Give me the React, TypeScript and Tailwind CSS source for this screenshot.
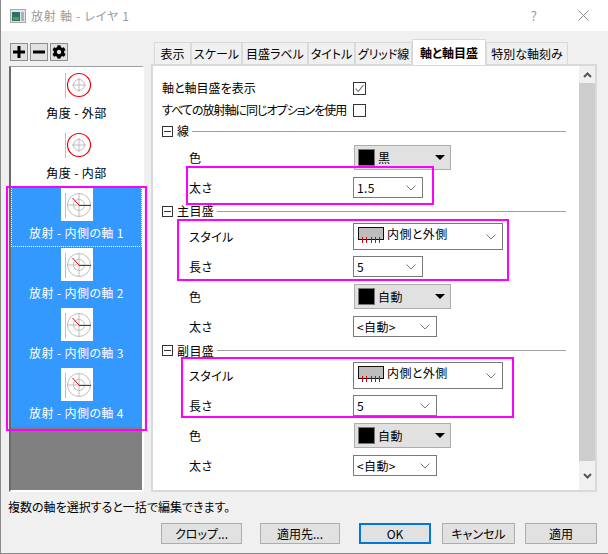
import { FaCog } from "react-icons/fa";

const font = "font-['Noto_Sans_CJK_JP','Liberation_Sans',sans-serif] [font-feature-settings:'palt']";

const tabs = [
  { label: "表示", width: "w-[37px]" },
  { label: "スケール", width: "w-[51px]" },
  { label: "目盛ラベル", width: "w-[66px]" },
  { label: "タイトル", width: "w-[47px]" },
  { label: "グリッド線", width: "w-[57px]" },
  { label: "軸と軸目盛", width: "w-[74px]", active: true },
  { label: "特別な軸刻み", width: "w-[82px]" },
];

function AngleIcon() {
  return (
    <svg width="32" height="33" viewBox="0 0 32 33" className="bg-white">
      <path d="M4.5 5V30" stroke="#bdbdbd" fill="none" />
      <path d="M18 10V24M11 17H25" stroke="#bdbdbd" fill="none" />
      <circle cx="18" cy="17" r="5.5" stroke="#bdbdbd" fill="none" />
      <circle cx="18" cy="17" r="11.5" stroke="#f0000c" strokeWidth="1.2" fill="none" />
    </svg>
  );
}

function RadialIcon() {
  return (
    <svg width="32" height="33" viewBox="0 0 32 33" className="bg-white">
      <path d="M4.5 5V30" stroke="#bdbdbd" fill="none" />
      <path d="M18 5V29M6 17H30" stroke="#bdbdbd" fill="none" />
      <circle cx="18" cy="17" r="5.5" stroke="#bdbdbd" fill="none" />
      <circle cx="18" cy="17" r="11.5" stroke="#bdbdbd" fill="none" />
      <path d="M18 17.5H30M18 17L11.5 10" stroke="#d4000f" fill="none" />
    </svg>
  );
}

function ListItem({ label, selected, focused }: { label: string; selected?: boolean; focused?: boolean }) {
  return (
    <div
      className={`h-[60px] flex flex-col items-center border border-dotted ${
        selected ? "bg-[#3399ff] text-white" : "bg-white text-black"
      } ${focused ? "border-white" : "border-transparent"}`}
    >
      {selected ? <RadialIcon /> : <AngleIcon />}
      <span className="mt-[3px] text-[12px] leading-[18px] tracking-[0.4px] whitespace-nowrap">{label}</span>
    </div>
  );
}

function Check({ checked }: { checked?: boolean }) {
  return (
    <div className="w-[13px] h-[13px] border border-[#333] bg-white flex items-center justify-center">
      {checked && (
        <svg width="11" height="11" viewBox="0 0 11 11">
          <path d="M1.5 5.5L4.2 8.5L9.5 2" stroke="#666" strokeWidth="1.1" fill="none" />
        </svg>
      )}
    </div>
  );
}

function Chevron() {
  return (
    <svg width="10" height="6" viewBox="0 0 10 6" className="shrink-0">
      <path d="M0.5 0.5L5 5L9.5 0.5" stroke="#7a7a7a" fill="none" />
    </svg>
  );
}

function Combo({ value, width, tall }: { value: React.ReactNode; width: string; tall?: boolean }) {
  return (
    <div
      className={`${width} ${tall ? "h-[27px] items-start pt-[2px]" : "h-[21px] items-center"} flex justify-between ml-[-1px] pl-[3px] pr-[6px] border border-[#7a7a7a] bg-white text-[12px]`}
    >
      <div className="flex items-start gap-[2px] leading-[16px] tracking-[0.4px]">{value}</div>
      <div className={tall ? "mt-[8px]" : ""}>
        <Chevron />
      </div>
    </div>
  );
}

function ColorButton({ label }: { label: string }) {
  return (
    <div className="w-[97px] h-[25px] flex items-center pl-[3px] pr-[4px] border border-[#adadad] bg-[#e1e1e1] text-[12px]">
      <div className="w-[17px] h-[17px] bg-black border border-[#777]" />
      <span className="ml-[3px] tracking-[0.6px]">{label}</span>
      <div className="ml-auto w-0 h-0 border-x-[5px] border-x-transparent border-t-[5px] border-t-black mr-[1px]" />
    </div>
  );
}

function TickSample() {
  return (
    <svg width="27" height="18" viewBox="0 0 27 18" className="shrink-0 mt-[1px] ml-[1px]">
      <rect x="0.5" y="0.5" width="25" height="12" fill="#bdbdbd" stroke="#111" />
      <path d="M4.5 10V16M8.5 10V16M13.5 10V16M17.5 10V16M21.5 10V16" stroke="#d4000f" fill="none" />
    </svg>
  );
}

function GroupHeader({ label, height }: { label: string; height: string }) {
  return (
    <div className={`${height} flex items-center pl-[9px] pr-[13px]`}>
      <div className="w-[11px] h-[11px] border border-[#333] flex items-center justify-center">
        <div className="w-[7px] h-px bg-[#333]" />
      </div>
      <span className="ml-[4px] text-[12px] tracking-[0.4px]">{label}</span>
      <div className="ml-[3px] flex-1 h-px bg-[#a0a0a0]" />
    </div>
  );
}

function Row({ label, height, children }: { label: string; height: string; children: React.ReactNode }) {
  return (
    <div className={`${height} flex items-center pl-[36px]`}>
      <span className="w-[165px] text-[12px] tracking-[0.4px]">{label}</span>
      {children}
    </div>
  );
}

function CheckRow({ label, checked, tight }: { label: string; checked?: boolean; tight?: boolean }) {
  return (
    <div className="h-[22px] flex items-center pl-[9px]">
      <span className={`w-[191px] text-[12px] whitespace-nowrap ${tight ? "tracking-[-1px]" : ""}`}>{label}</span>
      <Check checked={checked} />
    </div>
  );
}

function FooterButton({ label, width, primary }: { label: string; width: string; primary?: boolean }) {
  return (
    <div
      className={`${width} h-[21px] flex items-center justify-center bg-[#e1e1e1] text-[12px] ${
        primary ? "border-2 border-[#0078d7]" : "border border-[#adadad]"
      }`}
    >
      {label}
    </div>
  );
}

function Highlight({ className }: { className: string }) {
  return <div className={`absolute border-2 border-[#ff00ff] pointer-events-none ${className}`} />;
}

export default function App() {
  return (
    <div className={`${font} relative w-[608px] h-[554px] bg-[#f0f0f0] text-black border-l border-b border-[#8a8a8a] overflow-hidden`}>
      {/* title bar */}
      <div className="h-[31px] bg-white flex items-center pl-[9px] pr-[19px]">
        <svg width="16" height="14" viewBox="0 0 16 14" className="shrink-0">
          <rect x="0.5" y="0.5" width="15" height="13" fill="#e4e4e4" stroke="#a8a8a8" />
          <rect x="2" y="3" width="8" height="9" fill="#2f6f6a" />
          <rect x="3" y="8" width="6" height="3" fill="#4aa05a" />
          <rect x="11" y="3" width="3" height="9" fill="#9fb4c8" />
        </svg>
        <span className="ml-[5px] text-[12px] tracking-[0.75px] text-[#9a9a9a]">放射 軸 - レイヤ 1</span>
        <span className="ml-auto mr-[41px] text-[13px] text-[#9a9a9a]">?</span>
        <svg width="11" height="11" viewBox="0 0 11 11">
          <path d="M0.5 0.5L10.5 10.5M10.5 0.5L0.5 10.5" stroke="#8a8a8a" fill="none" />
        </svg>
      </div>

      <div className="flex">
        {/* axis list */}
        <div className="w-[135px] ml-[8px] pt-[12px]">
          <div className="flex gap-[2px] pl-[1px]">
            <div className="w-[18px] h-[18px] border border-[#8f8f8f] bg-[#e1e1e1] flex items-center justify-center">
              <svg width="14" height="14" viewBox="0 0 14 14">
                <path d="M7 1V13M1 7H13" stroke="#000" strokeWidth="3" fill="none" />
              </svg>
            </div>
            <div className="w-[18px] h-[18px] border border-[#8f8f8f] bg-[#e1e1e1] flex items-center justify-center">
              <svg width="14" height="14" viewBox="0 0 14 14">
                <path d="M1 7H13" stroke="#000" strokeWidth="3" fill="none" />
              </svg>
            </div>
            <div className="w-[18px] h-[18px] border border-[#8f8f8f] bg-[#e1e1e1] flex items-center justify-center">
              <FaCog size={14} color="#000" />
            </div>
          </div>
          <div className="mt-[5px] h-[426px] bg-[#808080] border-t border-x-2 border-b-2 border-t-[#a0a0a0] border-l-[#696969] border-r-white border-b-white">
            <ListItem label="角度 - 外部" />
            <ListItem label="角度 - 内部" />
            <ListItem label="放射 - 内側の軸 1" selected focused />
            <ListItem label="放射 - 内側の軸 2" selected />
            <ListItem label="放射 - 内側の軸 3" selected />
            <ListItem label="放射 - 内側の軸 4" selected />
          </div>
        </div>

        {/* tabs + options */}
        <div className="w-[446px] ml-[7px] pt-[8px]">
          <div className="h-[25px] flex items-end pl-[3px] relative z-10">
            {tabs.map((tab) =>
              tab.active ? (
                <div
                  key={tab.label}
                  className={`${tab.width} h-[26px] mb-[-1px] bg-white border border-b-0 border-[#d9d9d9] flex items-center justify-center text-[12px] font-bold whitespace-nowrap`}
                >
                  {tab.label}
                </div>
              ) : (
                <div
                  key={tab.label}
                  className={`${tab.width} h-[22px] border border-b-0 border-[#d9d9d9] flex items-center justify-center text-[12px] whitespace-nowrap`}
                >
                  {tab.label}
                </div>
              ),
            )}
          </div>
          <div className="h-[428px] bg-white border-2 border-[#d9d9d9] flex">
            <div className="flex-1 pt-[11px]">
              <CheckRow label="軸と軸目盛を表示" checked />
              <CheckRow label="すべての放射軸に同じオプションを使用" tight />
              <GroupHeader label="線" height="h-[20px]" />
              <Row label="色" height="h-[33px]">
                <ColorButton label="黒" />
              </Row>
              <Row label="太さ" height="h-[27px]">
                <Combo value="1.5" width="w-[70px]" />
              </Row>
              <GroupHeader label="主目盛" height="h-[20px]" />
              <Row label="スタイル" height="h-[31px]">
                <Combo
                  tall
                  width="w-[150px]"
                  value={
                    <>
                      <TickSample />
                      内側と外側
                    </>
                  }
                />
              </Row>
              <Row label="長さ" height="h-[29px]">
                <Combo value="5" width="w-[70px]" />
              </Row>
              <Row label="色" height="h-[31px]">
                <ColorButton label="自動" />
              </Row>
              <Row label="太さ" height="h-[29px]">
                <Combo value="<自動>" width="w-[84px]" />
              </Row>
              <GroupHeader label="副目盛" height="h-[19px]" />
              <Row label="スタイル" height="h-[31px]">
                <Combo
                  tall
                  width="w-[150px]"
                  value={
                    <>
                      <TickSample />
                      内側と外側
                    </>
                  }
                />
              </Row>
              <Row label="長さ" height="h-[29px]">
                <Combo value="5" width="w-[84px]" />
              </Row>
              <Row label="色" height="h-[31px]">
                <ColorButton label="自動" />
              </Row>
              <Row label="太さ" height="h-[29px]">
                <Combo value="<自動>" width="w-[84px]" />
              </Row>
            </div>
            {/* scrollbar */}
            <div className="w-[16px] bg-[#f0f0f0] flex flex-col">
              <div className="h-[17px] flex items-center justify-center">
                <svg width="9" height="6" viewBox="0 0 9 6">
                  <path d="M1 5L4.5 1.5L8 5" stroke="#555" strokeWidth="2" fill="none" />
                </svg>
              </div>
              <div className="h-[378px] bg-[#cdcdcd]" />
              <div className="flex-1 flex items-center justify-center">
                <svg width="9" height="6" viewBox="0 0 9 6">
                  <path d="M1 1L4.5 4.5L8 1" stroke="#555" strokeWidth="2" fill="none" />
                </svg>
              </div>
            </div>
          </div>
        </div>
      </div>

      {/* footer */}
      <p className="pl-[7px] mt-[6px] text-[12px] leading-[18px]">複数の軸を選択すると一括で編集できます。</p>
      <div className="flex pl-[160px] mt-[7px]">
        <FooterButton label="クロップ..." width="w-[81px]" />
        <div className="w-[18px]" />
        <FooterButton label="適用先..." width="w-[80px]" />
        <div className="w-[19px]" />
        <FooterButton label="OK" width="w-[72px]" primary />
        <div className="w-[11px]" />
        <FooterButton label="キャンセル" width="w-[73px]" />
        <div className="w-[10px]" />
        <FooterButton label="適用" width="w-[72px]" />
      </div>

      {/* annotation frames */}
      <Highlight className="left-[5px] top-[186px] w-[141px] h-[245px]" />
      <Highlight className="left-[185px] top-[166px] w-[248px] h-[39px]" />
      <Highlight className="left-[176px] top-[219px] w-[332px] h-[62px]" />
      <Highlight className="left-[180px] top-[357px] w-[333px] h-[61px]" />
    </div>
  );
}
